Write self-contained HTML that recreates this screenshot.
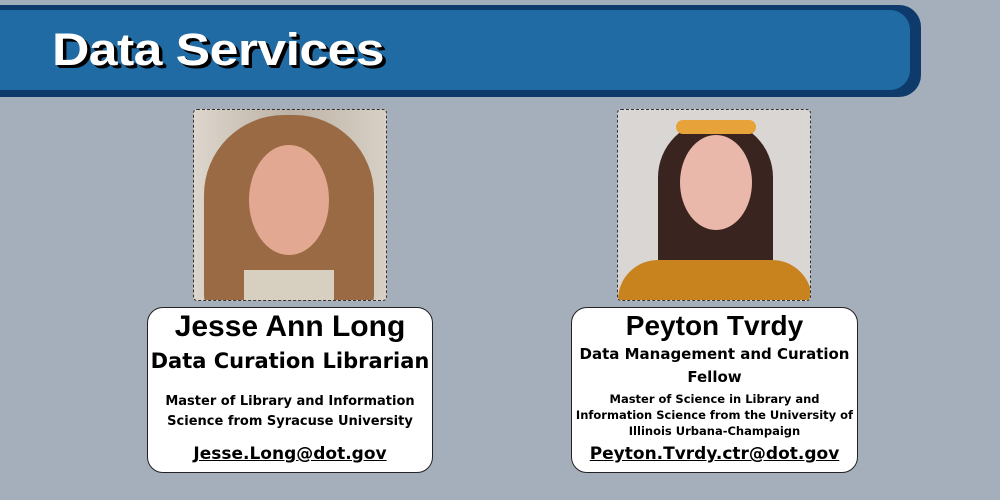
<!DOCTYPE html><html><head><style>
body{margin:0;width:1000px;height:500px;background:#a4afbb;position:relative;overflow:hidden;font-family:"Liberation Sans",sans-serif}
.outer{position:absolute;left:-20px;top:5px;width:941px;height:92px;background:#0e3a6c;border-radius:0 22px 22px 0}
.inner{position:absolute;left:-20px;top:10px;width:930px;height:80px;background:#206ba4;border-radius:0 20px 20px 0}
h1{position:absolute;left:52px;top:24px;margin:0;font-size:45px;color:#fff;font-weight:bold;letter-spacing:-0.5px;text-shadow:2px 2px 0 #000,3px 3px 0 #000;transform:scaleX(1.15);transform-origin:left}
.ph{position:absolute;top:109px;width:192px;height:190px;border:1px dashed #333;border-radius:4px;overflow:hidden}
.box{position:absolute;top:307px;height:164px;background:#fff;border:1px solid #222;border-radius:16px;text-align:center;color:#000;font-family:"DejaVu Sans","Liberation Sans",sans-serif;font-weight:bold}
.box div{position:absolute;left:0;right:0}
u{text-decoration:underline}
</style></head><body>
<div class="outer"></div><div class="inner"></div>
<h1>Data Services</h1>
<div class="ph" style="left:193px;background:linear-gradient(90deg,#ddd6cc,#bdb2a6 50%,#d8d0c5)">
<div style="position:absolute;left:10px;top:5px;width:170px;height:200px;border-radius:80px 80px 20px 20px;background:#9a6a45"></div>
<div style="position:absolute;left:55px;top:35px;width:80px;height:110px;border-radius:50%;background:#e3a891"></div>
<div style="position:absolute;left:50px;top:160px;width:90px;height:40px;background:#d7cfc0"></div>
</div>
<div class="ph" style="left:617px;background:#d9d6d4">
<div style="position:absolute;left:40px;top:10px;width:115px;height:180px;border-radius:60px 60px 30px 30px;background:#3a2420"></div>
<div style="position:absolute;left:62px;top:25px;width:72px;height:95px;border-radius:50%;background:#e9b8aa"></div>
<div style="position:absolute;left:58px;top:10px;width:80px;height:14px;border-radius:10px;background:#e7a23a"></div>
<div style="position:absolute;left:0;top:150px;width:194px;height:50px;border-radius:40px 40px 0 0;background:#c8821e"></div>
</div>
<div class="box" style="left:147px;width:284px">
<div style="top:2px;font-family:'Liberation Sans',sans-serif;font-size:30px">Jesse Ann Long</div>
<div style="top:41px;font-size:21px">Data Curation Librarian</div>
<div style="top:84px;font-size:13px;line-height:20px">Master of Library and Information<br>Science from Syracuse University</div>
<div style="top:136px;font-size:17px"><u>Jesse.Long@dot.gov</u></div>
</div>
<div class="box" style="left:571px;width:285px">
<div style="top:2px;font-family:'Liberation Sans',sans-serif;font-size:28px">Peyton Tvrdy</div>
<div style="top:35px;font-size:15px;line-height:23px">Data Management and Curation<br>Fellow</div>
<div style="top:83px;font-size:11.5px;line-height:16px">Master of Science in Library and<br>Information Science from the University of<br>Illinois Urbana-Champaign</div>
<div style="top:136px;font-size:17px"><u>Peyton.Tvrdy.ctr@dot.gov</u></div>
</div>
</body></html>
